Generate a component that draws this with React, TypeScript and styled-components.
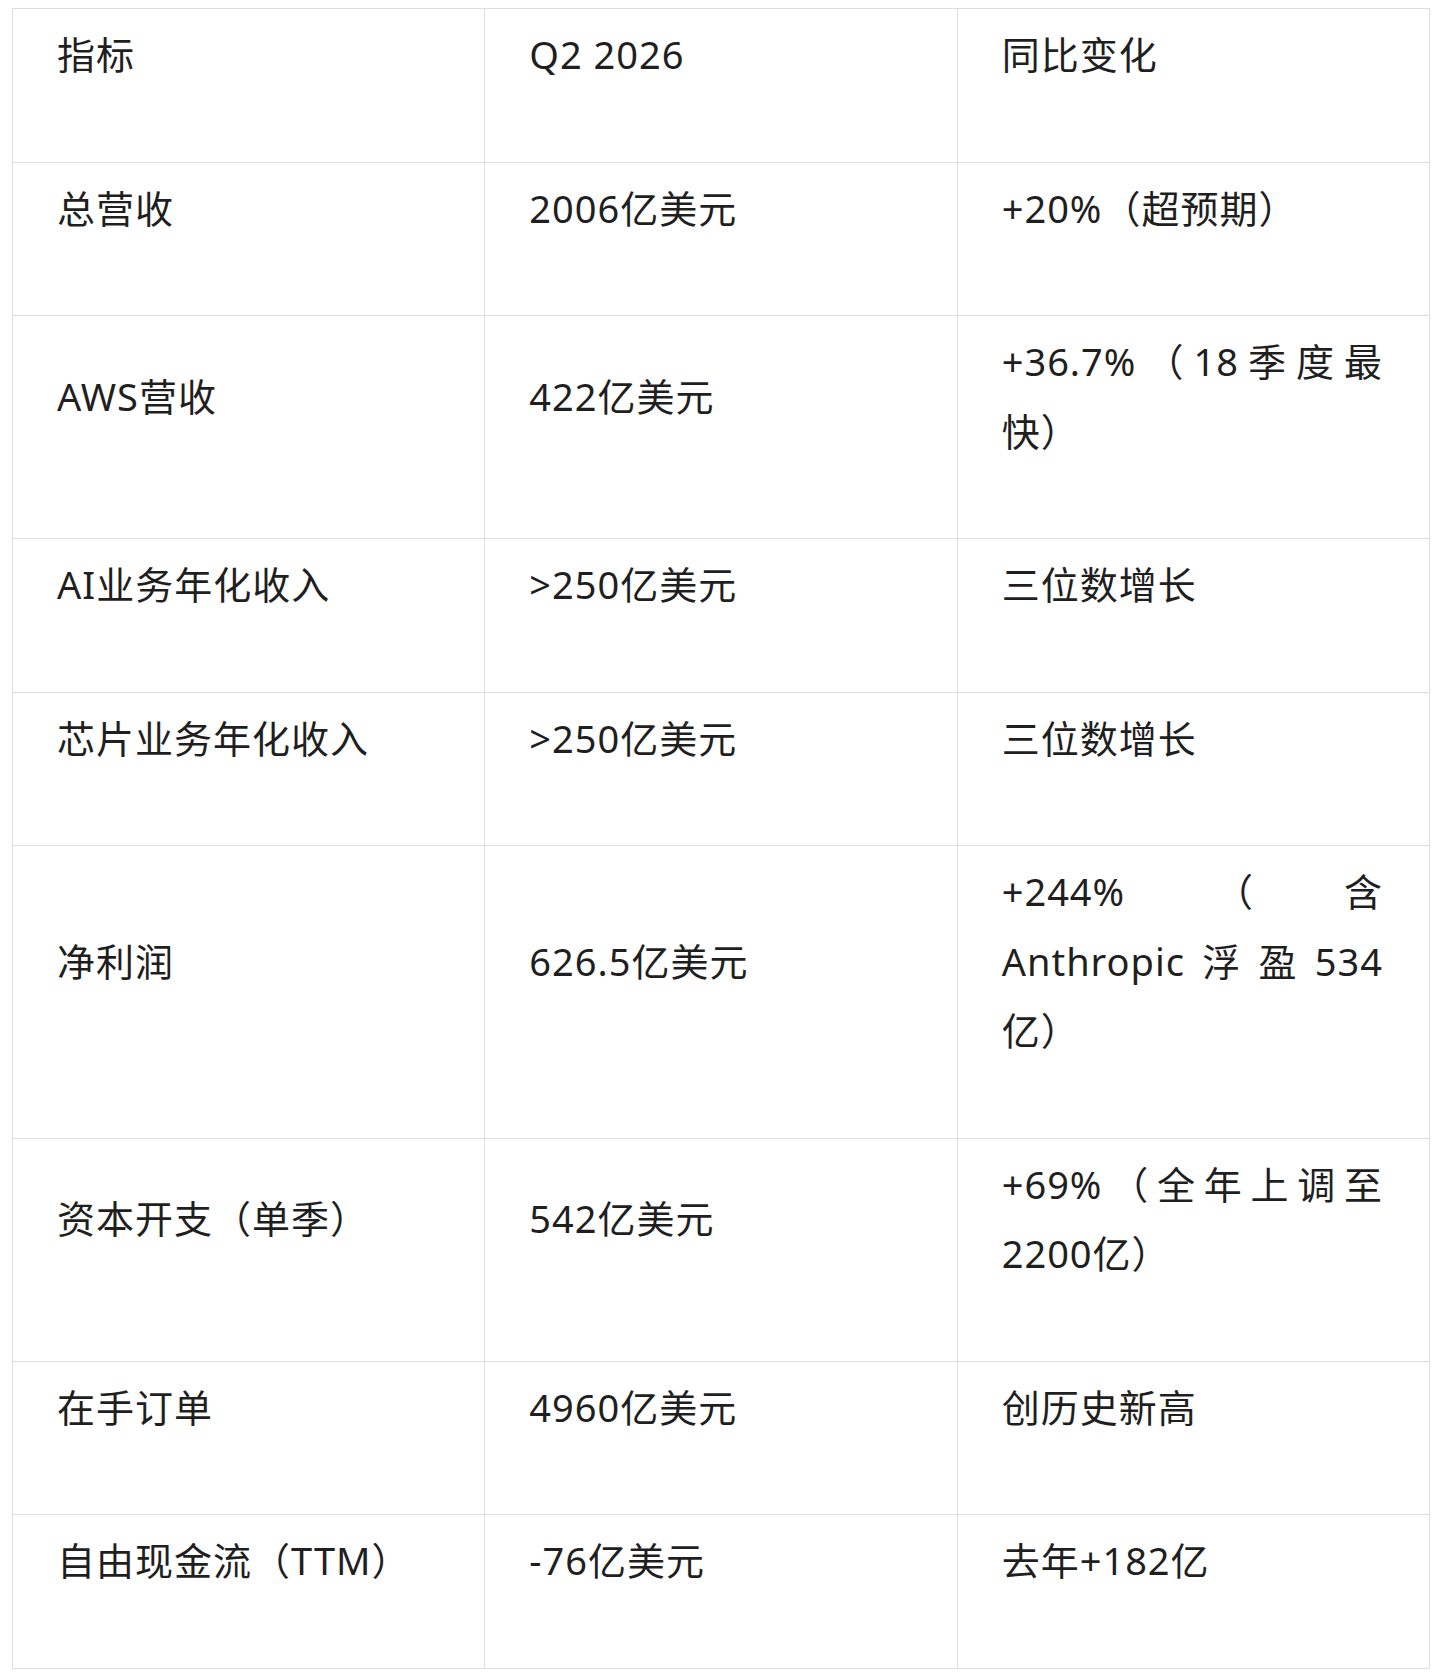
import React from "react";
import styled, { createGlobalStyle } from "styled-components";

const GlobalStyle = createGlobalStyle`
  html, body {
    margin: 0;
    padding: 0;
    background: #ffffff;
  }
  body {
    padding: 8px 0 0 12px;
    font-family: "Noto Sans", "Noto Sans CJK SC", sans-serif;
  }
`;

const Table = styled.table`
  width: 1418px;
  table-layout: fixed;
  border-collapse: collapse;
  border: 1px solid #dedede;
  color: #1f1f1f;
  font-family: "Noto Sans", "Noto Sans CJK SC", sans-serif;
  font-size: 38px;
  letter-spacing: 1px;
  line-height: 69.5px;
`;

const Row = styled.tr``;

const Cell = styled.td`
  border: 1px solid #dedede;
  padding: 11px 46px 72px 44px;
  vertical-align: middle;
  text-align: justify;
  font-weight: 400;
`;

type RowData = [string, string, string];

const rows: RowData[] = [
  ["指标", "Q2 2026", "同比变化"],
  ["总营收", "2006亿美元", "+20%（超预期）"],
  ["AWS营收", "422亿美元", "+36.7%（18季度最快）"],
  ["AI业务年化收入", ">250亿美元", "三位数增长"],
  ["芯片业务年化收入", ">250亿美元", "三位数增长"],
  ["净利润", "626.5亿美元", "+244%（含Anthropic浮盈534亿）"],
  ["资本开支（单季）", "542亿美元", "+69%（全年上调至2200亿）"],
  ["在手订单", "4960亿美元", "创历史新高"],
  ["自由现金流（TTM）", "-76亿美元", "去年+182亿"],
];

export default function App() {
  return (
    <>
      <GlobalStyle />
      <Table>
        <tbody>
          {rows.map((r, i) => (
            <Row key={i}>
              {r.map((c, j) => (
                <Cell key={j}>{c}</Cell>
              ))}
            </Row>
          ))}
        </tbody>
      </Table>
    </>
  );
}
